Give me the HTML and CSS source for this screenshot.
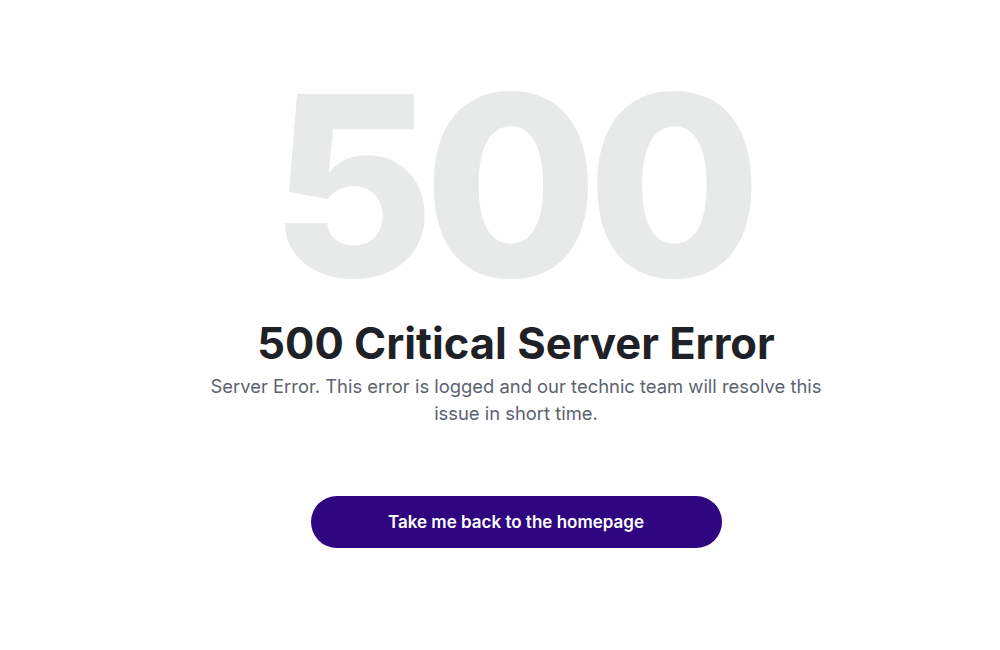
FILE: index.html
```html
<!DOCTYPE html>
<html lang="en">
<head>
<meta charset="utf-8">
<title>500 Critical Server Error</title>
<link rel="stylesheet" href="styles.css">
</head>
<body>
<main class="page">
  <div class="code">500</div>
  <h1 class="title">500 Critical Server Error</h1>
  <p class="desc">Server Error. This error is logged and our technic team will resolve this issue in short time.</p>
  <a class="btn" href="#">Take me back to the homepage</a>
</main>
</body>
</html>
```
FILE: styles.css
```css
html, body {
  margin: 0;
  padding: 0;
  background: #ffffff;
}
body {
  font-family: Inter, "Noto Sans", sans-serif;
  width: 1000px;
  height: 650px;
  overflow: hidden;
}
.page {
  display: flex;
  flex-direction: column;
  align-items: center;
  padding-top: 60px;
  padding-left: 32px;
}
.code {
  font-size: 252px;
  font-weight: 800;
  line-height: 252px;
  height: 256px;
  color: #e8e9e9;
  letter-spacing: -11px;
  padding-right: 11px;
}
.title {
  margin: 3px 0 0;
  font-size: 43.5px;
  font-weight: 700;
  line-height: 48px;
  color: #1e2125;
}
.desc {
  margin: 6px 0 0;
  width: 640px;
  text-align: center;
  font-size: 18.4px;
  line-height: 27px;
  color: #5c6270;
}
.btn {
  margin-top: 69px;
  width: 411px;
  height: 52px;
  border-radius: 26px;
  background: #2f0580;
  color: #ffffff;
  text-decoration: none;
  font-size: 17px;
  font-weight: 600;
  display: flex;
  align-items: center;
  justify-content: center;
}
```
